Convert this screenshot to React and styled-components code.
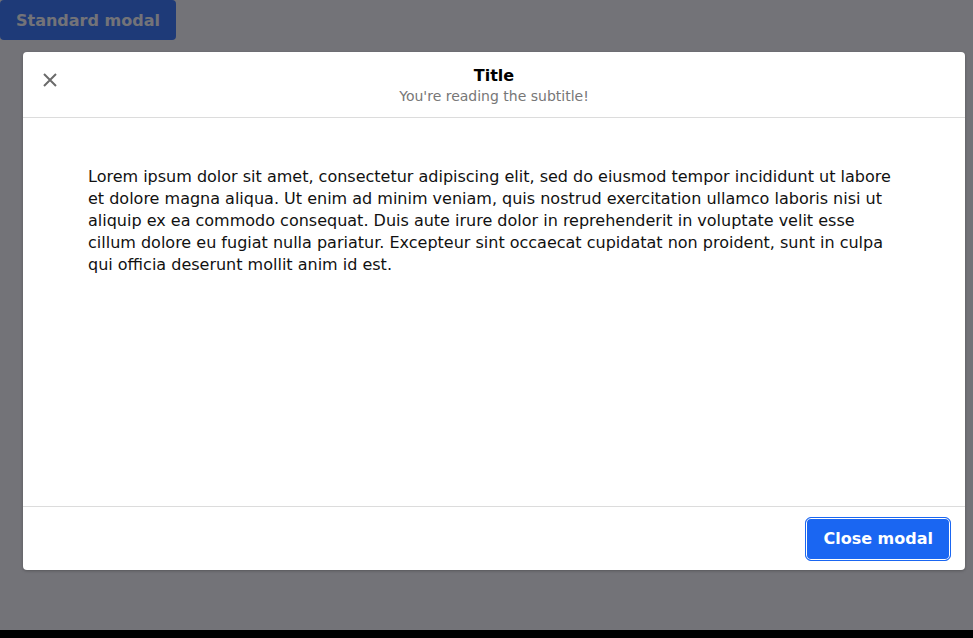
import React from 'react'
import styled, { createGlobalStyle } from 'styled-components'

const GlobalStyle = createGlobalStyle`
    html {
        background: #000;
    }
    body {
        margin: 0;
        font-family: "DejaVu Sans", Verdana, sans-serif;
    }
`

const Page = styled.div`
    position: relative;
    height: 630px;
    background: #fff;
`

const OpenButton = styled.button`
    height: 40px;
    padding: 0 16px;
    border: none;
    border-radius: 4px;
    background: #4381ff;
    color: #fff;
    font: bold 16px "DejaVu Sans", sans-serif;
`

const Overlay = styled.div`
    position: absolute;
    inset: 0;
    background: rgba(0, 0, 10, 0.55);
    padding: 52px 8px 60px 23px;
    display: flex;
`

const Modal = styled.div`
    flex: 1;
    display: flex;
    flex-direction: column;
    background: #fff;
    border-radius: 4px;
    box-shadow: 0 1px 3px rgba(0, 0, 0, 0.25);
    overflow: hidden;
`

const Header = styled.header`
    height: 65px;
    border-bottom: 1px solid #dcdcdc;
    display: grid;
    grid-template-columns: 1fr auto 1fr;
    align-items: center;
`

const CloseIcon = styled.button`
    justify-self: start;
    margin: -9px 0 0 10px;
    width: 34px;
    height: 34px;
    border: none;
    background: none;
    padding: 0;
    display: flex;
    align-items: center;
    justify-content: center;
    color: #6b6b6b;
`

const Titles = styled.div`
    text-align: center;
    margin-top: 3px;
`

const Title = styled.h2`
    margin: 0;
    font-size: 16px;
    font-weight: bold;
    line-height: 20px;
    color: #000;
`

const Subtitle = styled.p`
    margin: 0;
    font-size: 14px;
    line-height: 20px;
    color: #777;
`

const Body = styled.div`
    flex: 1;
    padding: 48px 64px 0 65px;
`

const Text = styled.p`
    margin: 0;
    font-size: 16px;
    line-height: 22px;
    color: #111;
`

const Footer = styled.footer`
    height: 63px;
    border-top: 1px solid #dcdcdc;
    display: flex;
    align-items: center;
    justify-content: flex-end;
    padding: 0 14px 0 15px;
`

const ActionButton = styled.button`
    height: 44px;
    padding: 0 17px;
    border: 1px solid #1a66f2;
    border-radius: 6px;
    box-shadow: inset 0 0 0 1px #fff;
    background: #1a66f2;
    color: #fff;
    font: bold 16px "DejaVu Sans", sans-serif;
`

const App = () => {
    return (
        <Page>
            <GlobalStyle />
            <OpenButton>Standard modal</OpenButton>
            <Overlay>
                <Modal>
                    <Header>
                        <CloseIcon aria-label="Close">
                            <svg width="14" height="14" viewBox="0 0 14 14">
                                <path d="M1 1L13 13M13 1L1 13" stroke="currentColor" strokeWidth="2" />
                            </svg>
                        </CloseIcon>
                        <Titles>
                            <Title>Title</Title>
                            <Subtitle>You're reading the subtitle!</Subtitle>
                        </Titles>
                        <div />
                    </Header>
                    <Body>
                        <Text>
                            Lorem ipsum dolor sit amet, consectetur adipiscing elit, sed do eiusmod tempor incididunt ut labore et dolore magna aliqua. Ut enim ad minim veniam, quis nostrud exercitation ullamco laboris nisi ut aliquip ex ea commodo consequat. Duis aute irure dolor in reprehenderit in voluptate velit esse cillum dolore eu fugiat nulla pariatur. Excepteur sint occaecat cupidatat non proident, sunt in culpa qui officia deserunt mollit anim id est.
                        </Text>
                    </Body>
                    <Footer>
                        <ActionButton>Close modal</ActionButton>
                    </Footer>
                </Modal>
            </Overlay>
        </Page>
    )
}

export default App
